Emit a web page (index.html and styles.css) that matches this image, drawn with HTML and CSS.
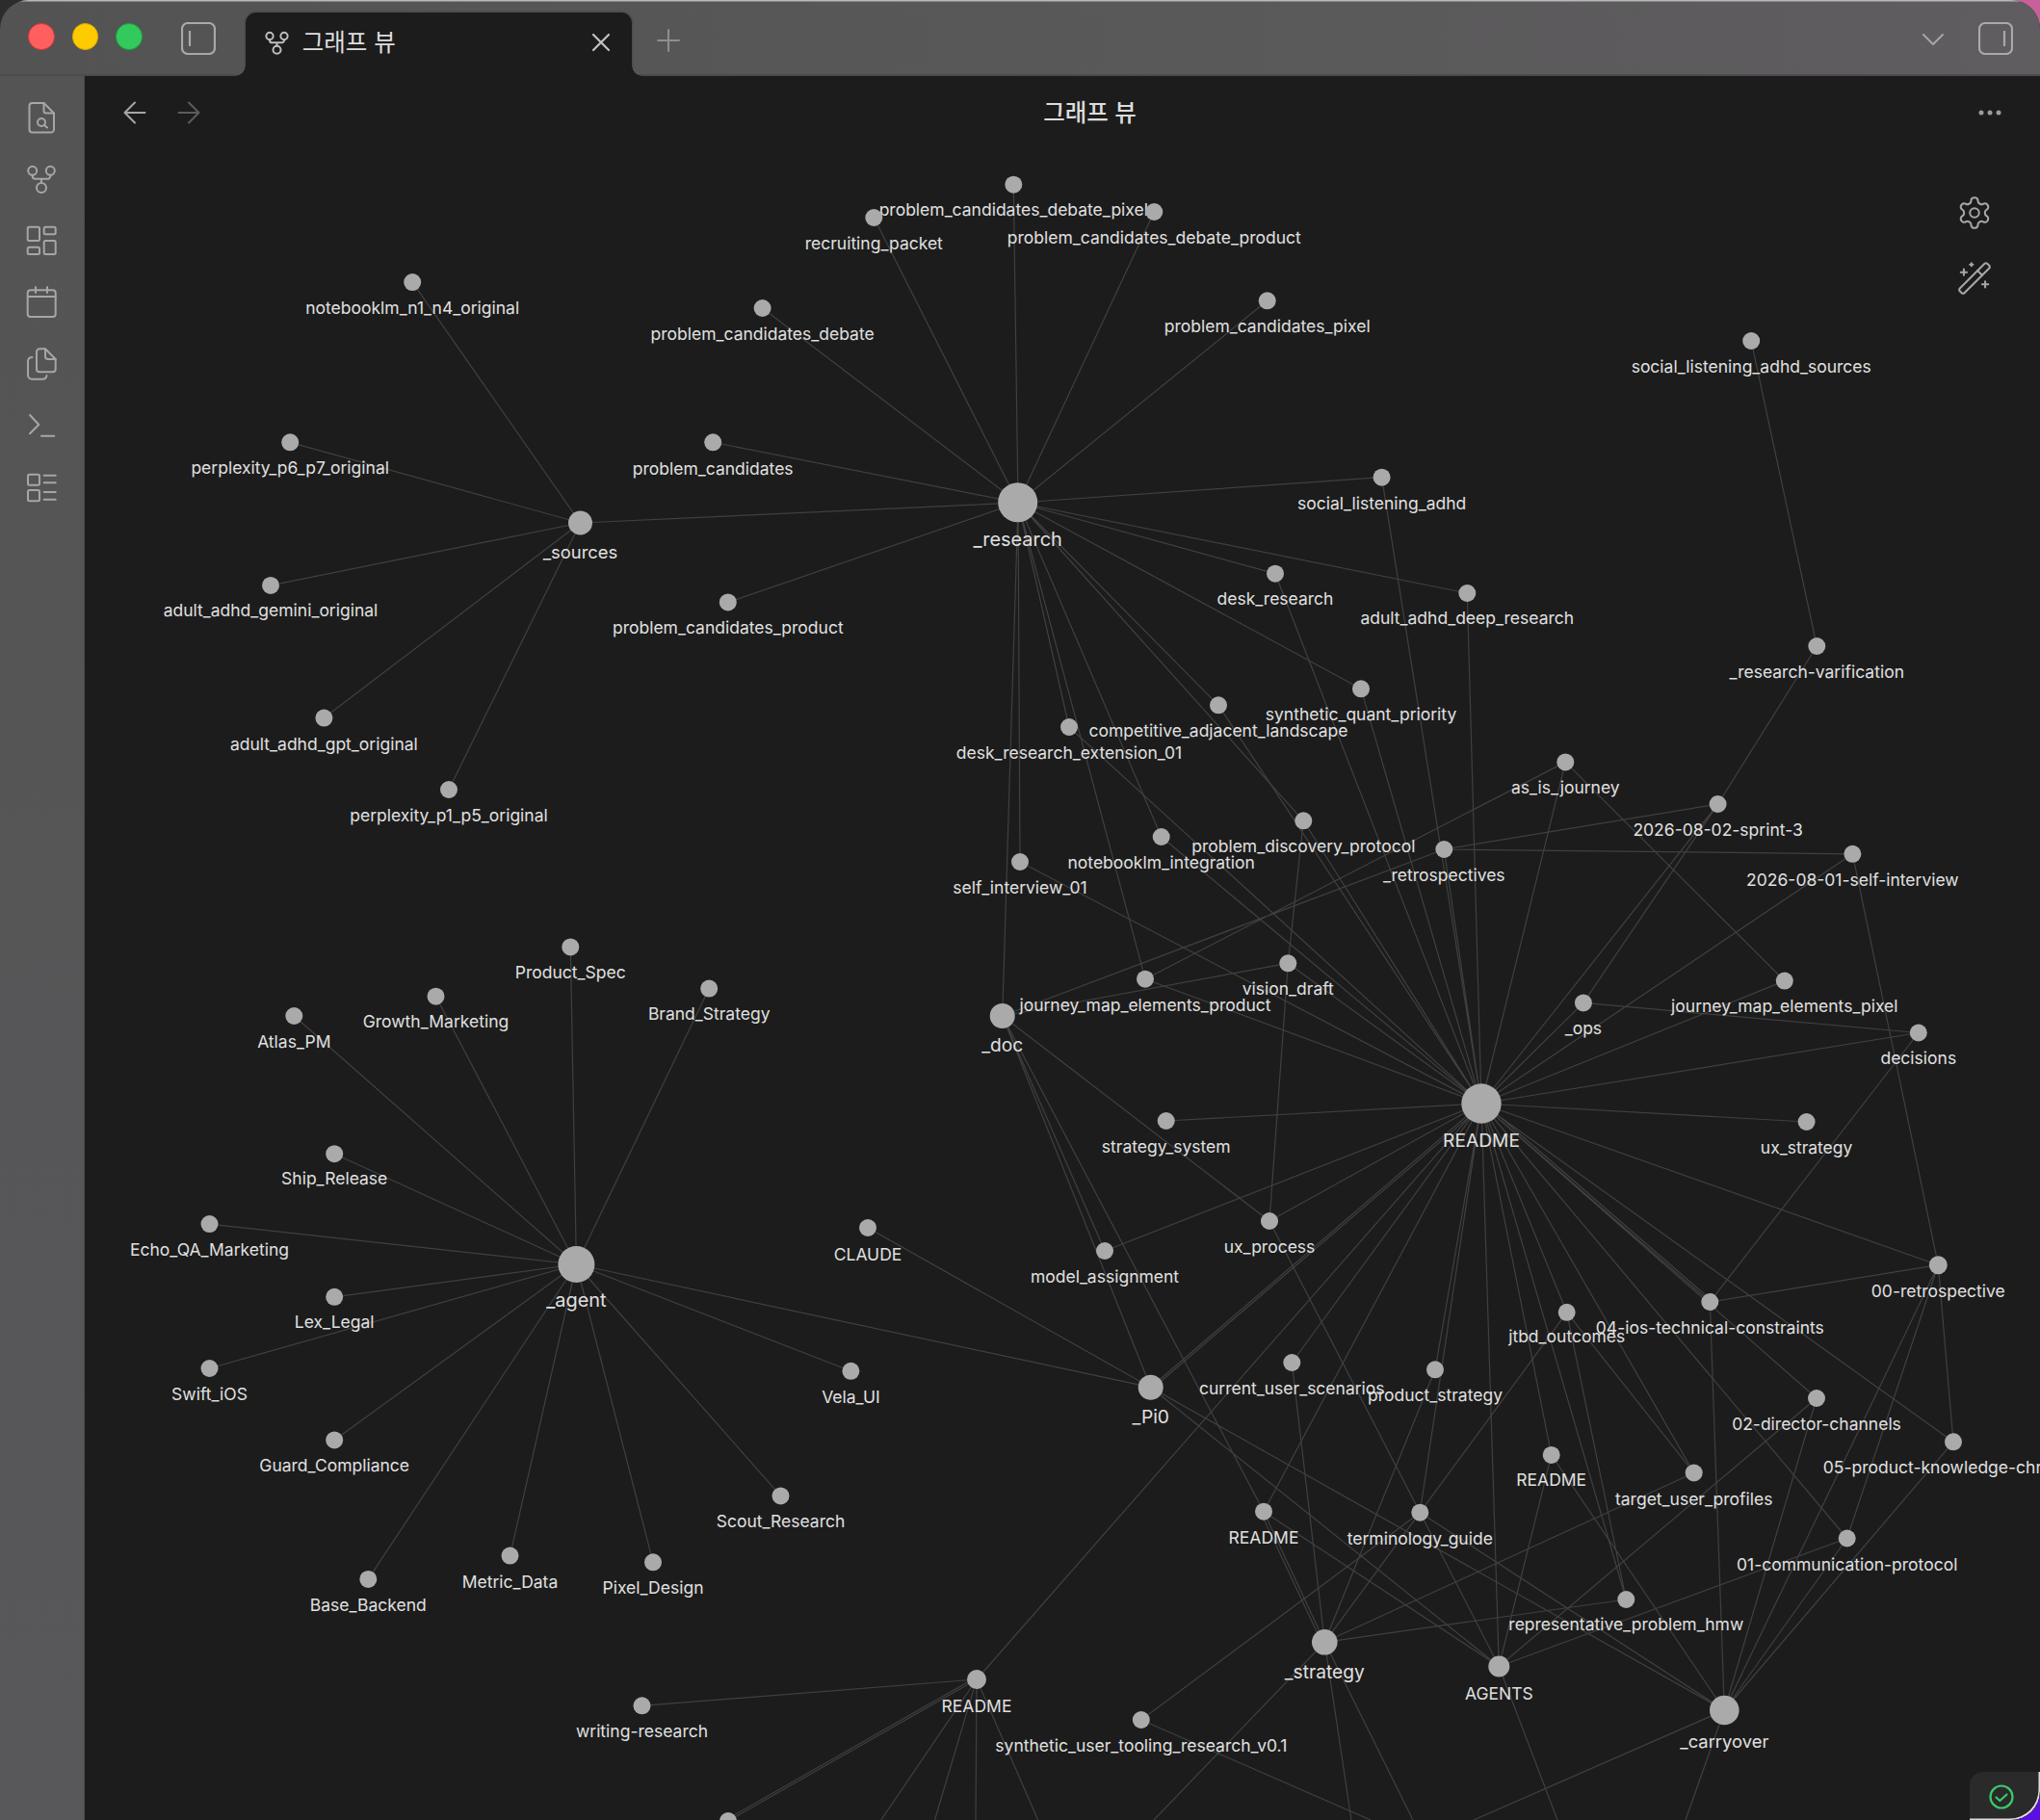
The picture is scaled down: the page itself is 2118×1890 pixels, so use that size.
FILE: index.html
```html
<!DOCTYPE html>
<html lang="ko">
<head>
<meta charset="utf-8">
<title>그래프 뷰</title>
<link rel="stylesheet" href="styles.css">
</head>
<body>
<div class="window">
  <header class="titlebar">
    <div class="lights">
      <span class="light red"></span>
      <span class="light yellow"></span>
      <span class="light green"></span>
    </div>
    <svg class="pane-toggle" viewBox="0 0 36 34"><rect x="1" y="1" width="34" height="32" rx="6"/><path d="M9 9v16"/></svg>
    <div class="tab">
      <svg class="icon tab-icon" viewBox="0 0 36 36"><circle cx="8.7" cy="9.3" r="4.5"/><circle cx="27.3" cy="9.3" r="4.5"/><circle cx="18" cy="27" r="5"/><path d="M8.7 13.8v1a3 3 0 0 0 3 3h12.6a3 3 0 0 0 3-3v-1M18 18v4"/></svg>
      <span class="tab-title">그래프 뷰</span>
      <svg class="icon tab-close" viewBox="0 0 20 20"><path d="M2 2l16 16M18 2L2 18"/></svg>
    </div>
    <svg class="icon tab-plus" viewBox="0 0 24 24"><path d="M12 1v22M1 12h22"/></svg>
    <div class="titlebar-right">
      <svg class="icon chevron" viewBox="0 0 22 13"><path d="M1 1l10 10L21 1"/></svg>
      <svg class="pane-toggle" viewBox="0 0 36 34"><rect x="1" y="1" width="34" height="32" rx="6"/><path d="M27 9v16"/></svg>
    </div>
  </header>
  <div class="body">
    <nav class="ribbon">
      <svg class="icon" viewBox="0 0 36 36"><path d="M20.5 3H8.5a3 3 0 0 0-3 3v24.5a3 3 0 0 0 3 3H28a3 3 0 0 0 3-3V13.5z"/><path d="M20.5 3v8a2.5 2.5 0 0 0 2.5 2.5h8"/><circle cx="18" cy="23" r="4"/><path d="M21 26l3 2.5"/></svg>
      <svg class="icon" viewBox="0 0 36 36"><circle cx="8.7" cy="9.3" r="4.5"/><circle cx="27.3" cy="9.3" r="4.5"/><circle cx="18" cy="27" r="5"/><path d="M8.7 13.8v1a3 3 0 0 0 3 3h12.6a3 3 0 0 0 3-3v-1M18 18v4"/></svg>
      <svg class="icon" viewBox="0 0 36 36"><rect x="3.7" y="3.7" width="12.3" height="14.3" rx="1.5"/><rect x="20.7" y="3.7" width="12" height="7.6" rx="1.5"/><rect x="20.7" y="18" width="12" height="14" rx="1.5"/><rect x="3.7" y="24.7" width="12.3" height="7.3" rx="1.5"/></svg>
      <svg class="icon" viewBox="0 0 36 36"><rect x="3.7" y="5.3" width="29" height="27.7" rx="3"/><path d="M3.7 12h29M12 2v6M24 2v6"/></svg>
      <svg class="icon" viewBox="0 0 36 36"><path d="M22 2.3h-6a3 3 0 0 0-3 3v18a3 3 0 0 0 3 3h13.7a3 3 0 0 0 3-3V13z"/><path d="M22 2.3V10a3 3 0 0 0 3 3h7.7"/><path d="M8.5 11A4.5 4.5 0 0 0 4 15v14.5a4.2 4.2 0 0 0 4 4.2h11a4.5 4.5 0 0 0 4.5-3.7"/></svg>
      <svg class="icon" viewBox="0 0 36 36"><path d="M6 7l9.3 10L6 26.3M18 28.7h13.3"/></svg>
      <svg class="icon" viewBox="0 0 36 36"><rect x="4" y="4.7" width="12" height="11" rx="1.5"/><rect x="4" y="21" width="12" height="11.3" rx="1.5"/><path d="M20.7 5.7h12M20.7 13.3h12M20.7 23h12M20.7 30.7h12"/></svg>
    </nav>
    <main class="content">
      <div class="view-header">
        <div class="view-nav">
          <svg class="icon nav-btn" viewBox="0 0 24 24"><path d="M12 19l-7-7 7-7M19 12H5"/></svg>
          <svg class="icon nav-btn nav-off" viewBox="0 0 24 24"><path d="M12 5l7 7-7 7M5 12h14"/></svg>
        </div>
        <div class="view-title">그래프 뷰</div>
        <svg class="view-more" viewBox="0 0 34 8"><circle cx="8" cy="4" r="2.5"/><circle cx="17" cy="4" r="2.5"/><circle cx="26" cy="4" r="2.5"/></svg>
      </div>

      <svg class="graph" viewBox="88 79 2030 1811">
        <g class="edges">
          <path d="M602.5 543L428.2 293.1M602.5 543L301.2 459.3M602.5 543L281 607.9M602.5 543L336.4 745.6M602.5 543L466 820M602.5 543L1057 522"/>
          <path d="M1057 522L907.3 226M1057 522L1052.3 191.7M1057 522L1198.3 220M1057 522L1315.7 312.3M1057 522L791.6 320M1057 522L740.2 459.3M1057 522L755.8 625.4M1057 522L1434.6 495.7M1057 522L1324 595.7M1057 522L1523.3 616M1057 522L1413 715.3M1057 522L1265 732.3M1057 522L1353.3 852.3M1057 522L1110 755M1057 522L1205.7 869M1057 522L1059 895M1057 522L1040.7 1055M1057 522L1189 1016.7"/>
          <path d="M1538 1146L1434.6 495.7M1538 1146L1324 595.7M1538 1146L1523.3 616M1538 1146L1413 715.3M1538 1146L1265 732.3M1538 1146L1353.3 852.3M1538 1146L1110 755M1538 1146L1205.7 869M1538 1146L1059 895M1538 1146L1499.3 882M1538 1146L1625.3 791.4M1538 1146L1783.6 835M1538 1146L1643.9 1041.4M1538 1146L1852.8 1018.6M1538 1146L1991.8 1072.5M1538 1146L1923.4 886.8M1538 1146L1337.3 1000.3M1538 1146L1189 1016.7M1538 1146L1210.7 1164M1538 1146L1875.6 1165M1538 1146L1318 1268M1538 1146L1147 1299M1538 1146L2012.3 1313.7M1538 1146L1775.3 1352M1538 1143L1775.3 1349M1538 1146L1626.7 1362.8M1538 1146L1341.3 1415M1538 1146L1490 1422.3M1538 1146L1194.7 1440.7M1538 1149L1194.7 1443.5M1538 1146L1886 1452M1538 1146L2028 1497.3M1538 1146L1610.7 1510.9M1538 1146L1758.7 1529.5M1538 1146L1312 1569.7M1538 1146L1474.3 1570.7M1538 1146L1917.7 1597.5M1538 1146L1688.3 1661M1538 1146L1556.3 1730.5M1538 1146L1014 1744"/>
          <path d="M1818.2 354L1886.3 671M1886.3 671L1783.6 835M1783.6 835L1499.3 882M1499.3 882L1923.4 886.8M1499.3 882L1040.7 1055M1783.6 835L1643.9 1041.4M1625.3 791.4L1189 1016.7M1625.3 791.4L1852.8 1018.6M1643.9 1041.4L1991.8 1072.5M1991.8 1072.5L1775.3 1352M1923.4 886.8L2012.3 1313.7M1353.3 852.3L1337.3 1000.3M1337.3 1000.3L1318 1268M1337.3 1000.3L1040.7 1055"/>
          <path d="M1040.7 1055L1194.7 1440.7M1040.7 1055L1147 1299M1040.7 1055L1312 1569.7M1040.7 1055L1318 1268M1318 1268L1474.3 1570.7M901 1275L1194.7 1440.7M598.4 1313L1194.7 1440.7M1194.7 1440.7L1790.3 1776M1194.7 1440.7L1556.3 1730.5"/>
          <path d="M2012.3 1313.7L1775.3 1352M2012.3 1313.7L2028 1497.3M2012.3 1313.7L1790.3 1776M2012.3 1313.7L1917.7 1597.5M1775.3 1352L1790.3 1776M1886 1452L1790.3 1776M1886 1452L1556.3 1730.5M1917.7 1597.5L1790.3 1776M1917.7 1597.5L1556.3 1730.5M2028 1497.3L1790.3 1776"/>
          <path d="M1626.7 1362.8L1688.3 1661M1626.7 1362.8L1474.3 1570.7M1626.7 1362.8L1758.7 1529.5M1610.7 1510.9L1556.3 1730.5M1610.7 1510.9L1790.3 1776M1474.3 1570.7L1556.3 1730.5M1474.3 1570.7L1790.3 1776M1474.3 1570.7L1375.3 1705.3M1474.3 1570.7L1184.8 1786M1312 1569.7L1556.3 1730.5M1312 1569.7L1375.3 1705.3M1309 1571L1373 1707M1341.3 1415L1375.3 1705.3M1490 1422.3L1375.3 1705.3M1758.7 1529.5L1375.3 1705.3M1688.3 1661L1375.3 1705.3"/>
          <path d="M1375.3 1705.3L1198 1890M1375.3 1705.3L1403 1890M1375.3 1705.3L1467 1890M1556.3 1730.5L1617 1890M1790.3 1776L1530 1890M1790.3 1776L1750 1890M1184.8 1786L1423 1890M1014 1744L666.5 1771.3M1014 1744L756 1891M1014 1741.5L756 1888.5M1014 1744L914.7 1890M1014 1744L970.5 1890M1014 1744L1013 1890M1014 1744L1077.7 1890"/>
          <path d="M598.4 1313L592.3 983.4M598.4 1313L452.5 1034.7M598.4 1313L736.2 1026.6M598.4 1313L305.3 1055M598.4 1313L347.2 1198.2M598.4 1313L217.5 1271.1M598.4 1313L347.2 1346.8M598.4 1313L217.5 1421M598.4 1313L883.4 1423.8M598.4 1313L347.2 1495.4M598.4 1313L810.5 1553.4M598.4 1313L529.5 1615.6M598.4 1313L678 1622.3M598.4 1313L382.3 1639.9"/>
        </g>
        <g class="labels">
          <text x="1052.3" y="224">problem_candidates_debate_pixel</text>
          <text x="907.3" y="259">recruiting_packet</text>
          <text x="1198.3" y="253">problem_candidates_debate_product</text>
          <text x="1315.7" y="345">problem_candidates_pixel</text>
          <text x="791.6" y="353">problem_candidates_debate</text>
          <text x="428.2" y="326">notebooklm_n1_n4_original</text>
          <text x="301.2" y="492">perplexity_p6_p7_original</text>
          <text x="740.2" y="493">problem_candidates</text>
          <text x="1818.2" y="387">social_listening_adhd_sources</text>
          <text class="hub-xl" x="1056.7" y="567">_research</text>
          <text x="1434.6" y="529">social_listening_adhd</text>
          <text class="hub-s" x="602.5" y="580">_sources</text>
          <text x="281" y="640">adult_adhd_gemini_original</text>
          <text x="755.8" y="658">problem_candidates_product</text>
          <text x="1324" y="627.5">desk_research</text>
          <text x="1523.3" y="648">adult_adhd_deep_research</text>
          <text x="1886.3" y="704">_research-varification</text>
          <text x="1413" y="748.3">synthetic_quant_priority</text>
          <text x="1265" y="765">competitive_adjacent_landscape</text>
          <text x="1110" y="788">desk_research_extension_01</text>
          <text x="336.4" y="778.6">adult_adhd_gpt_original</text>
          <text x="466" y="853">perplexity_p1_p5_original</text>
          <text x="1625.3" y="824.4">as_is_journey</text>
          <text x="1783.6" y="868">2026-08-02-sprint-3</text>
          <text x="1353.3" y="885.3">problem_discovery_protocol</text>
          <text x="1205.7" y="902">notebooklm_integration</text>
          <text x="1499.3" y="915">_retrospectives</text>
          <text x="1923.4" y="919.8">2026-08-01-self-interview</text>
          <text x="1059" y="928">self_interview_01</text>
          <text x="1337.3" y="1033.3">vision_draft</text>
          <text x="1189" y="1049.7">journey_map_elements_product</text>
          <text x="1852.8" y="1051">journey_map_elements_pixel</text>
          <text x="1643.9" y="1074.4">_ops</text>
          <text class="hub-m" x="1040.7" y="1092">_doc</text>
          <text x="1991.8" y="1104.7">decisions</text>
          <text class="hub-m" x="1538" y="1191">README</text>
          <text x="1210.7" y="1197">strategy_system</text>
          <text x="1875.6" y="1198">ux_strategy</text>
          <text x="1318" y="1301">ux_process</text>
          <text x="1147" y="1332">model_assignment</text>
          <text x="2012.3" y="1346.7">00-retrospective</text>
          <text x="1775.3" y="1385">04-ios-technical-constraints</text>
          <text x="1626.7" y="1393.5">jtbd_outcomes</text>
          <text x="1341.3" y="1448">current_user_scenarios</text>
          <text x="1490" y="1455.3">product_strategy</text>
          <text class="hub-m" x="1194.7" y="1478">_Pi0</text>
          <text x="1886" y="1485">02-director-channels</text>
          <text x="2031" y="1530.3">05-product-knowledge-chronicle</text>
          <text x="1610.7" y="1543">README</text>
          <text x="1758.7" y="1562.5">target_user_profiles</text>
          <text x="1312" y="1602.7">README</text>
          <text x="1474.3" y="1603.7">terminology_guide</text>
          <text x="1917.7" y="1630.5">01-communication-protocol</text>
          <text x="1688.3" y="1693">representative_problem_hmw</text>
          <text class="hub-m" x="1375.3" y="1742.6">_strategy</text>
          <text x="1556.3" y="1764.5">AGENTS</text>
          <text class="hub-s" x="1790.3" y="1815.3">_carryover</text>
          <text x="1014" y="1778">README</text>
          <text x="666.5" y="1804.3">writing-research</text>
          <text x="1184.8" y="1819">synthetic_user_tooling_research_v0.1</text>
          <text x="592.3" y="1016.4">Product_Spec</text>
          <text x="452.5" y="1067">Growth_Marketing</text>
          <text x="736.2" y="1059">Brand_Strategy</text>
          <text x="305.3" y="1088">Atlas_PM</text>
          <text x="347.2" y="1230.2">Ship_Release</text>
          <text x="217.5" y="1304.1">Echo_QA_Marketing</text>
          <text x="901" y="1309">CLAUDE</text>
          <text x="347.2" y="1379">Lex_Legal</text>
          <text class="hub-xl" x="598.4" y="1357">_agent</text>
          <text x="217.5" y="1454">Swift_iOS</text>
          <text x="883.4" y="1456.8">Vela_UI</text>
          <text x="347.2" y="1528.4">Guard_Compliance</text>
          <text x="810.5" y="1586.4">Scout_Research</text>
          <text x="529.5" y="1648.6">Metric_Data</text>
          <text x="678" y="1655.3">Pixel_Design</text>
          <text x="382.3" y="1672.9">Base_Backend</text>
        </g>
        <g class="nodes">
          <circle cx="1052.3" cy="191.7" r="9"/><circle cx="907.3" cy="226" r="9"/><circle cx="1198.3" cy="220" r="9"/><circle cx="1315.7" cy="312.3" r="9"/><circle cx="791.6" cy="320" r="9"/><circle cx="428.2" cy="293.1" r="9"/><circle cx="301.2" cy="459.3" r="9"/><circle cx="740.2" cy="459.3" r="9"/><circle cx="1818.2" cy="354" r="9"/>
          <circle cx="1056.7" cy="521.7" r="20.5"/><circle cx="1434.6" cy="495.7" r="9"/><circle cx="602.5" cy="543" r="12.5"/><circle cx="281" cy="607.9" r="9"/><circle cx="755.8" cy="625.4" r="9"/><circle cx="1324" cy="595.7" r="9"/><circle cx="1523.3" cy="616" r="9"/><circle cx="1886.3" cy="671" r="9"/><circle cx="1413" cy="715.3" r="9"/><circle cx="1265" cy="732.3" r="9"/><circle cx="1110" cy="755" r="9"/><circle cx="336.4" cy="745.6" r="9"/><circle cx="466" cy="820" r="9"/><circle cx="1625.3" cy="791.4" r="9"/><circle cx="1783.6" cy="835" r="9"/><circle cx="1353.3" cy="852.3" r="9"/><circle cx="1205.7" cy="869" r="9"/><circle cx="1499.3" cy="882" r="9"/><circle cx="1923.4" cy="886.8" r="9"/><circle cx="1059" cy="895" r="9"/><circle cx="1337.3" cy="1000.3" r="9"/><circle cx="1189" cy="1016.7" r="9"/><circle cx="1852.8" cy="1018.6" r="9"/><circle cx="1643.9" cy="1041.4" r="9"/><circle cx="1040.7" cy="1055" r="13"/><circle cx="1991.8" cy="1072.5" r="9"/><circle cx="1538" cy="1146" r="20.7"/><circle cx="1210.7" cy="1164" r="9"/><circle cx="1875.6" cy="1165" r="9"/><circle cx="1318" cy="1268" r="9"/><circle cx="1147" cy="1299" r="9"/><circle cx="2012.3" cy="1313.7" r="9.5"/><circle cx="1775.3" cy="1352" r="9"/><circle cx="1626.7" cy="1362.8" r="9"/><circle cx="1341.3" cy="1415" r="9"/><circle cx="1490" cy="1422.3" r="9"/><circle cx="1194.7" cy="1440.7" r="13"/><circle cx="1886" cy="1452" r="9"/><circle cx="2028" cy="1497.3" r="9"/><circle cx="1610.7" cy="1510.9" r="9"/><circle cx="1758.7" cy="1529.5" r="9"/><circle cx="1312" cy="1569.7" r="9"/><circle cx="1474.3" cy="1570.7" r="9"/><circle cx="1917.7" cy="1597.5" r="9"/><circle cx="1688.3" cy="1661" r="9"/><circle cx="1375.3" cy="1705.3" r="13.3"/><circle cx="1556.3" cy="1730.5" r="11"/><circle cx="1790.3" cy="1776" r="15.3"/><circle cx="1014" cy="1744" r="10"/><circle cx="666.5" cy="1771.3" r="9"/><circle cx="1184.8" cy="1786" r="9"/><circle cx="756" cy="1891" r="9"/>
          <circle cx="592.3" cy="983.4" r="9"/><circle cx="452.5" cy="1034.7" r="9"/><circle cx="736.2" cy="1026.6" r="9"/><circle cx="305.3" cy="1055" r="9"/><circle cx="347.2" cy="1198.2" r="9"/><circle cx="217.5" cy="1271.1" r="9"/><circle cx="901" cy="1275" r="9"/><circle cx="347.2" cy="1346.8" r="9"/><circle cx="598.4" cy="1313" r="19"/><circle cx="217.5" cy="1421" r="9"/><circle cx="883.4" cy="1423.8" r="9"/><circle cx="347.2" cy="1495.4" r="9"/><circle cx="810.5" cy="1553.4" r="9"/><circle cx="529.5" cy="1615.6" r="9"/><circle cx="678" cy="1622.3" r="9"/><circle cx="382.3" cy="1639.9" r="9"/>
        </g>
      </svg>

      <div class="graph-controls">
        <svg class="icon control" viewBox="0 0 24 24"><path d="M12.22 2h-.44a2 2 0 0 0-2 2v.18a2 2 0 0 1-1 1.73l-.43.25a2 2 0 0 1-2 0l-.15-.08a2 2 0 0 0-2.73.73l-.22.38a2 2 0 0 0 .73 2.73l.15.1a2 2 0 0 1 1 1.72v.51a2 2 0 0 1-1 1.74l-.15.09a2 2 0 0 0-.73 2.73l.22.38a2 2 0 0 0 2.73.73l.15-.08a2 2 0 0 1 2 0l.43.25a2 2 0 0 1 1 1.73V20a2 2 0 0 0 2 2h.44a2 2 0 0 0 2-2v-.18a2 2 0 0 1 1-1.73l.43-.25a2 2 0 0 1 2 0l.15.08a2 2 0 0 0 2.73-.73l.22-.39a2 2 0 0 0-.73-2.73l-.15-.08a2 2 0 0 1-1-1.74v-.5a2 2 0 0 1 1-1.74l.15-.09a2 2 0 0 0 .73-2.73l-.22-.38a2 2 0 0 0-2.73-.73l-.15.08a2 2 0 0 1-2 0l-.43-.25a2 2 0 0 1-1-1.73V4a2 2 0 0 0-2-2z"/><circle cx="12" cy="12" r="3"/></svg>
        <svg class="icon control" viewBox="0 0 24 24"><path d="M21.64 3.64l-1.28-1.28a1.21 1.21 0 0 0-1.72 0L2.36 18.64a1.21 1.21 0 0 0 0 1.72l1.28 1.28a1.2 1.2 0 0 0 1.72 0L21.64 5.36a1.2 1.2 0 0 0 0-1.72"/><path d="M14 7l3 3M5 6v4M19 14v4M10 2v2M7 8H3M21 16h-4M11 3H9"/></svg>
      </div>

      <div class="status">
        <svg class="status-icon" viewBox="0 0 26 26"><circle cx="13" cy="13" r="11.5"/><path d="M7.5 13.5l3.8 3.5 7.2-6.5"/></svg>
      </div>
    </main>
  </div>
</div>
</body>
</html>
```
FILE: styles.css
```css
* { box-sizing: border-box; }
html, body { margin: 0; height: 100%; }
body {
  width: 2118px;
  height: 1890px;
  overflow: hidden;
  background:
    linear-gradient(90deg, #2c2c2c 0 50%, transparent 50%) top / 100% 50% no-repeat,
    linear-gradient(180deg, #c8609c 0 50%, #5b10e0 50%);
  font-family: Inter, "Noto Sans CJK KR", "Noto Sans", sans-serif;
}
.window {
  width: 2118px;
  height: 1890px;
  display: flex;
  flex-direction: column;
  overflow: hidden;
  border-radius: 30px 30px 30px 0;
  background: #1c1c1c;
}
.titlebar {
  flex: 0 0 79px;
  display: flex;
  align-items: center;
  padding: 6px 28px 0 29px;
  position: relative;
  background: linear-gradient(90deg, #535353, #5f5d5f);
  box-shadow: inset 0 1.5px 0 #b8b8b8, inset 0 -2px 0 #4b4b4b;
}
.lights { display: flex; gap: 18px; margin-top: -9px; }
.light { width: 27.6px; height: 27.6px; border-radius: 50%; border: 1px solid rgba(0,0,0,.18); }
.red { background: #ff5f5f; border-color: #e0333f; }
.yellow { background: #fdcb00; border-color: #e0a800; }
.green { background: #34c95c; border-color: #12a93a; }
.pane-toggle {
  width: 36px;
  height: 34px;
  margin-top: -6px;
  fill: none;
  stroke: #a9a9a9;
  stroke-width: 2.2;
}
.lights + .pane-toggle { margin-left: 40px; }
.icon {
  fill: none;
  stroke: #a6a6a6;
  stroke-width: 2;
  stroke-linecap: round;
  stroke-linejoin: round;
  flex: none;
}
.tab {
  align-self: flex-end;
  margin-left: 31px;
  width: 401px;
  height: 66px;
  display: flex;
  align-items: center;
  gap: 12px;
  padding: 0 22px 4px 18px;
  position: relative;
  background: #1c1c1c;
  border-radius: 11px 11px 0 0;
  box-shadow: 0 0 0 1.5px #4c4c4c;
  clip-path: inset(-2px -12px 0 -12px);
}
.tab::before, .tab::after {
  content: "";
  position: absolute;
  bottom: 0;
  width: 11px;
  height: 11px;
}
.tab::before { left: -11px; background: radial-gradient(circle at 0 0, transparent 10.5px, #1c1c1c 11px); }
.tab::after { right: -11px; background: radial-gradient(circle at 100% 0, transparent 10.5px, #1c1c1c 11px); }
.tab-icon { width: 29px; height: 29px; stroke-width: 2.5; stroke: #bdbdbd; }
.tab-title { flex: 1; font-size: 24.5px; color: #dedede; line-height: 1; }
.tab-close { width: 20px; height: 20px; stroke: #c2c2c2; stroke-width: 2.2; }
.tab-plus { width: 24px; height: 24px; margin: -1px 0 0 26px; stroke: #8f8f8f; stroke-width: 2; }
.titlebar-right { margin-left: auto; display: flex; align-items: center; gap: 36px; }
.chevron { width: 22px; height: 13px; margin-top: -2px; stroke: #a6a6a6; }
.body { flex: 1; display: flex; min-height: 0; }
.ribbon {
  flex: 0 0 88px;
  display: flex;
  flex-direction: column;
  align-items: center;
  gap: 28px;
  padding: 25px 1px 0 0;
  background: linear-gradient(180deg, #545454, #58575a);
  border-right: 1px solid #4a4a4a;
}
.ribbon .icon { width: 36px; height: 36px; }
.content { flex: 1; position: relative; min-width: 0; background: #1c1c1c; }
.view-header {
  height: 76px;
  display: grid;
  grid-template-columns: auto 1fr auto;
  align-items: center;
  padding: 0 35px 0 34px;
  position: relative;
  z-index: 1;
}
.view-nav { display: flex; gap: 20px; }
.nav-btn { width: 36px; height: 36px; stroke-width: 1.35; }
.nav-off { stroke: #5c5c5c; }
.view-title { text-align: center; font-size: 24.5px; font-weight: 500; color: #dcdcdc; line-height: 1; }
.view-more { width: 34px; height: 8px; fill: #9c9c9c; }
.graph {
  position: absolute;
  left: 0;
  top: 0;
  width: 2030px;
  height: 1811px;
  display: block;
}
.edges path { fill: none; stroke: #404040; stroke-width: 1.2; }
.labels text {
  font-family: Inter, "Noto Sans", sans-serif;
  font-size: 17.5px;
  fill: #e0e0e0;
  text-anchor: middle;
}
.labels .hub-xl { font-size: 19.9px; }
.labels .hub-m { font-size: 19.2px; }
.labels .hub-s { font-size: 18.4px; }
.nodes circle { fill: #aaaaaa; }
.graph-controls {
  position: absolute;
  top: 123px;
  right: 49px;
  display: flex;
  flex-direction: column;
  gap: 30px;
}
.control { width: 38px; height: 38px; stroke-width: 1.3; stroke: #a6a6a6; }
.status {
  position: absolute;
  right: 0;
  bottom: 0;
  width: 73px;
  height: 50px;
  display: flex;
  align-items: center;
  justify-content: center;
  padding: 2px 7px 0 0;
  background: #2a2a2a;
  border-radius: 14px 0 30px 0;
  box-shadow: inset -1.5px -1.5px 0 #dddddd;
}
.status-icon { width: 26px; height: 26px; fill: none; stroke: #3cc96a; stroke-width: 2.2; stroke-linecap: round; stroke-linejoin: round; }
```
